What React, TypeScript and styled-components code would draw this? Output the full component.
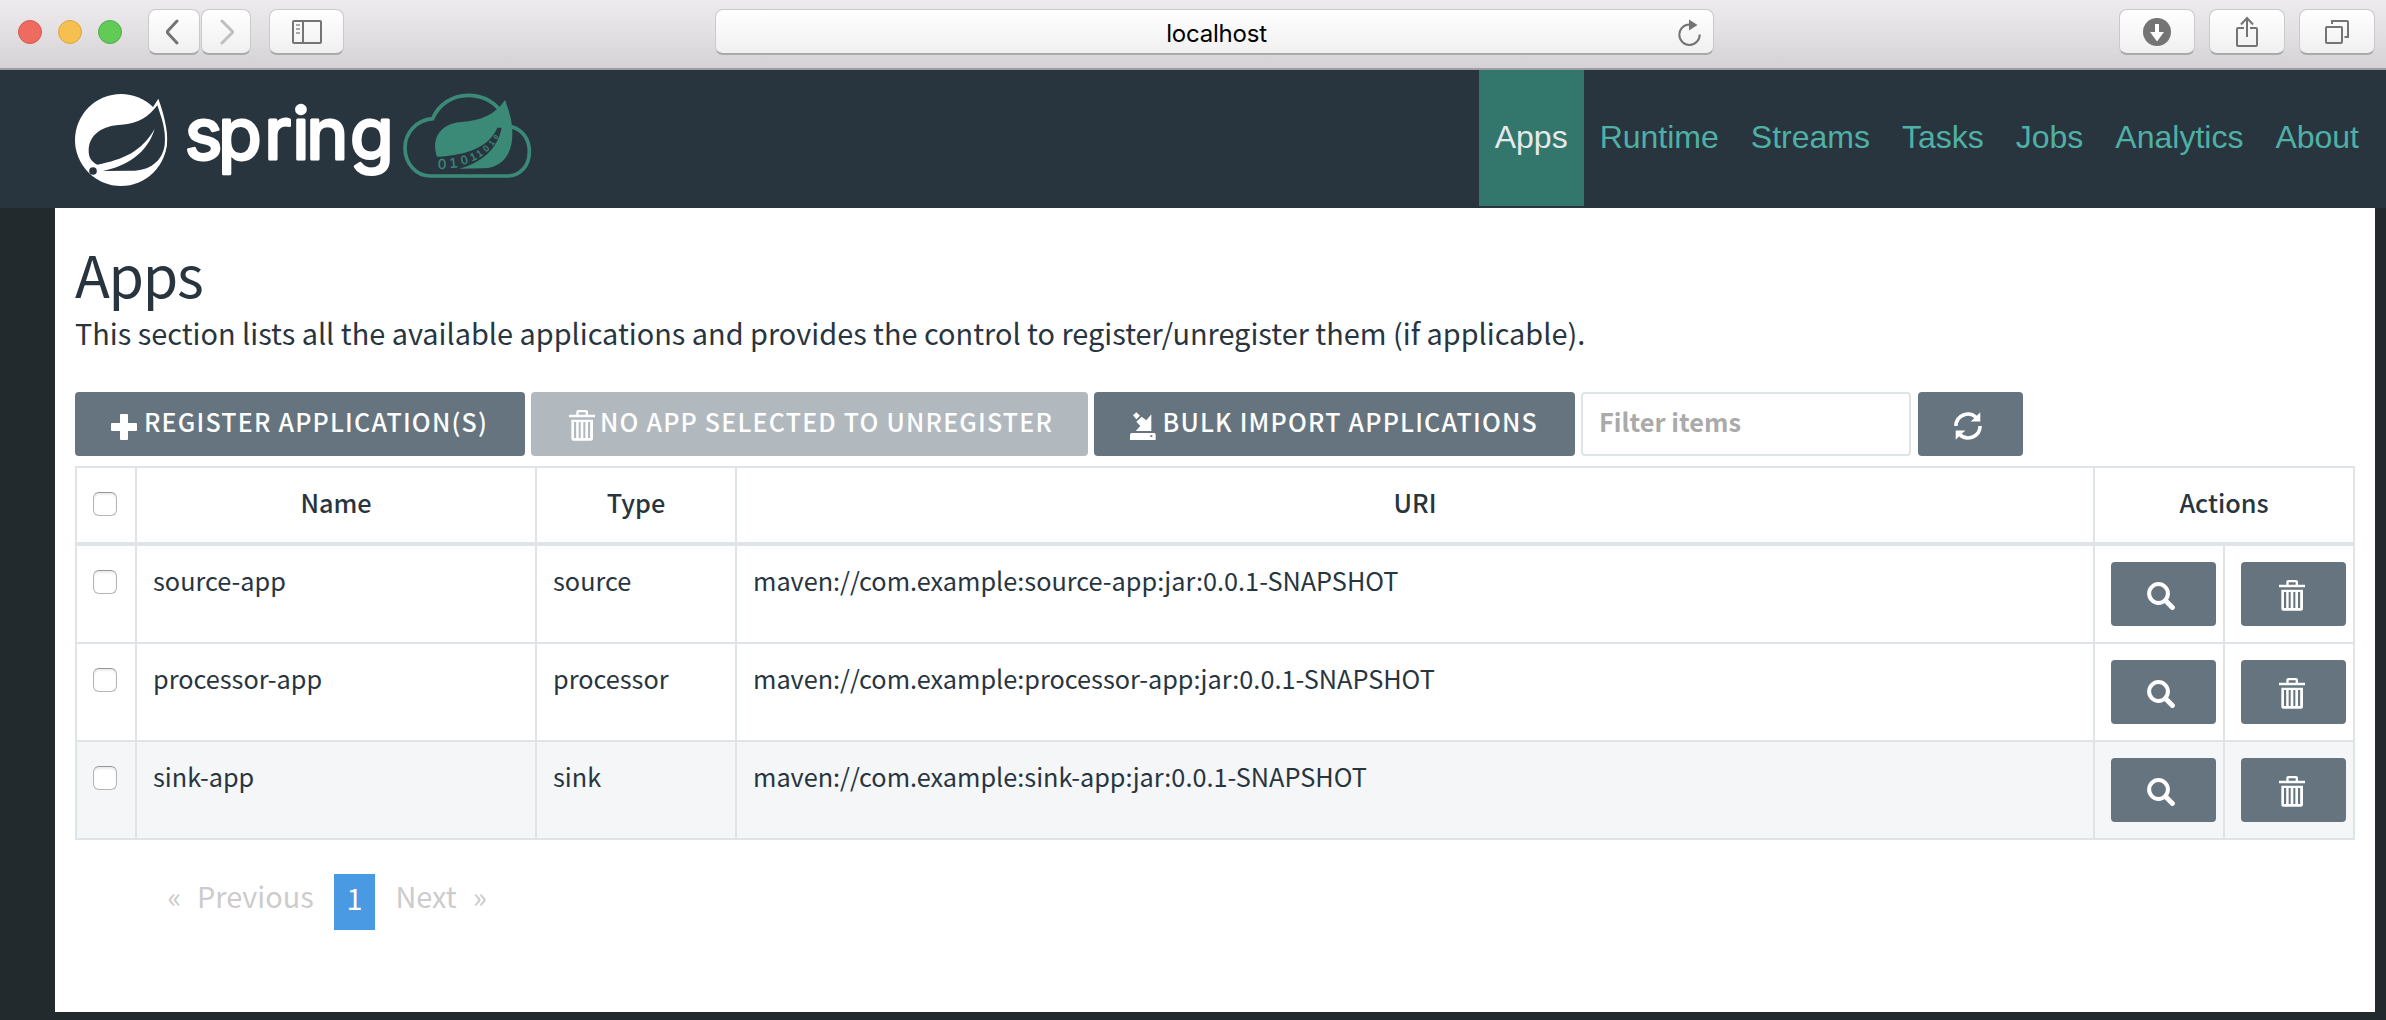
import React from "react";
import styled, { createGlobalStyle, css } from "styled-components";

const sans = `"Source Sans Pro", "Noto Sans CJK SC", "Open Sans", sans-serif`;
const ink = "#28353f";
const line = "#dfe5e7";
const slate = "#65747e";

const GlobalStyle = createGlobalStyle`
  *, *::before, *::after { box-sizing: border-box; }
  body { margin: 0; background: #232a2d; color: ${ink}; font-family: ${sans}; }
  button, input { font: inherit; margin: 0; }
`;

/* ---------- browser chrome ---------- */

const Page = styled.div`
  width: 2386px;
  height: 1020px;
  overflow: hidden;
  display: flex;
  flex-direction: column;
  background: #232a2d;
`;

const Chrome = styled.div`
  height: 70px;
  flex: none;
  display: flex;
  align-items: flex-start;
  padding: 9px 11.5px 0 18px;
  background: linear-gradient(#edebed, #e3e1e4 45%, #d4d2d5);
  border-bottom: 2px solid #a09ea2;
`;

const Lights = styled.div`
  display: flex;
  gap: 16px;
  margin: 11px 25.5px 0 0;
`;

const Light = styled.span<{ $fill: string; $edge: string }>`
  width: 24px;
  height: 24px;
  border-radius: 50%;
  background: ${(p) => p.$fill};
  border: 1px solid ${(p) => p.$edge};
`;

const raised = css`
  height: 46px;
  border: 1px solid #cbc9cc;
  border-bottom: 2px solid #a9a8aa;
  border-radius: 8px;
  background: linear-gradient(#ffffff, #f0f0f0);
`;

const ChromeButton = styled.button<{ $width: number; $gap?: number }>`
  ${raised}
  width: ${(p) => p.$width}px;
  margin-right: ${(p) => p.$gap ?? 0}px;
  padding: 0;
  display: flex;
  align-items: center;
  justify-content: center;
  color: #747474;
`;

const AddressBar = styled.div`
  ${raised}
  width: 999px;
  margin-left: 371px;
  margin-right: auto;
  padding-right: 8px;
  display: grid;
  grid-template-columns: 36px 1fr 28px;
  align-items: center;
  color: #747474;
`;

const Address = styled.span`
  grid-column: 2;
  text-align: center;
  color: #000;
  font: 400 24px/44px Inter, "Liberation Sans", sans-serif;
  letter-spacing: -0.2px;
  padding-top: 2px;
  padding-left: 4px;
`;

/* ---------- site header ---------- */

const Header = styled.header`
  height: 138px;
  flex: none;
  display: flex;
  justify-content: space-between;
  padding: 0 11px 2px 60px;
  background: ${ink};
`;

const LogoLink = styled.a`
  display: block;
  height: 120px;
  margin-top: 10px;
`;

const Nav = styled.nav`
  display: flex;
`;

const NavItem = styled.a<{ $active?: boolean }>`
  padding: 0 16px;
  font: 400 32px/134px "Liberation Sans", Arial, sans-serif;
  color: ${(p) => (p.$active ? "#e6e9ea" : "#4fb0a5")};
  background: ${(p) => (p.$active ? "#32766c" : "transparent")};
`;

/* ---------- content ---------- */

const Panel = styled.main`
  flex: none;
  height: 804px;
  margin: 0 11px 0 55px;
  padding: 27px 20px 0;
  background: #fff;
`;

const Title = styled.h1`
  margin: 0;
  font-size: 57.3px;
  font-weight: 400;
  line-height: 77px;
  letter-spacing: -1.3px;
`;

const Lead = styled.p`
  margin: 0 0 40px;
  font-size: 28.88px;
  line-height: 40px;
`;

const Toolbar = styled.div`
  display: flex;
  height: 64px;
  margin-bottom: 10px;
`;

const ActionButton = styled.button<{ $width: number; $gap?: number; $muted?: boolean; $inset?: number }>`
  width: ${(p) => p.$width}px;
  height: 64px;
  margin-right: ${(p) => p.$gap ?? 0}px;
  padding: 0 0 0 ${(p) => p.$inset ?? 36}px;
  border: 0;
  border-radius: 4px;
  display: flex;
  align-items: center;
  color: #fff;
  background: ${(p) => (p.$muted ? "#b1b9bf" : slate)};
  font-size: 25px;
  font-weight: 500;
  letter-spacing: 1.2px;
  white-space: nowrap;
  svg { flex: none; }
`;

const Label = styled.span<{ $indent: number }>`
  margin-left: ${(p) => p.$indent}px;
  line-height: 36px;
  padding-bottom: 6px;
`;

const FilterInput = styled.input`
  width: 329.5px;
  height: 64px;
  margin-right: 7.5px;
  padding: 0 16px 6px;
  border: 2px solid ${line};
  border-radius: 4px;
  background: #fff;
  font-size: 25.4px;
  font-weight: 700;
  outline: none;
  &::placeholder { color: #aaa; opacity: 1; }
`;

const Table = styled.div`
  border-top: 2px solid ${line};
  border-left: 2px solid ${line};
  font-size: 25.27px;
`;

const columns = css`
  display: grid;
  grid-template-columns: 60px 400px 200px 1358px 130px 130px;
`;

const HeadRow = styled.div`
  ${columns}
  height: 78px;
  border-bottom: 4px solid ${line};
  font-weight: 500;
  text-align: center;
  line-height: 69px;
`;

const Row = styled.div<{ $shaded?: boolean }>`
  ${columns}
  height: 98px;
  border-bottom: 2px solid ${line};
  background: ${(p) => (p.$shaded ? "#f4f6f8" : "#fff")};
`;

const Cell = styled.div<{ $span?: number }>`
  grid-column: span ${(p) => p.$span ?? 1};
  border-right: 2px solid ${line};
`;

const TextCell = styled(Cell)`
  padding: 14px 15px 0 16px;
  line-height: 40px;
`;

const CheckCell = styled(Cell)`
  padding: 24px 0 0 16px;
  line-height: 0;
  text-align: left;
`;

const ButtonCell = styled(Cell)`
  padding: 16px 0 0 16px;
`;

const Checkbox = styled.input.attrs({ type: "checkbox" })`
  appearance: none;
  width: 24px;
  height: 24px;
  border: 1.5px solid #b4b4b4;
  border-top-color: #969696;
  border-radius: 6px;
  background: #fff;
  box-shadow: inset 0 2px 2px #ececec;
`;

const Pagination = styled.div`
  display: flex;
  margin-top: 34px;
  padding-left: 92.5px;
  height: 56px;
  font-size: 28.86px;
  color: #ccc;
`;

const PageWord = styled.span<{ $width: number }>`
  width: ${(p) => p.$width}px;
  line-height: 43px;
`;

const CurrentPage = styled.span`
  width: 41px;
  margin-right: 20.5px;
  text-align: center;
  line-height: 47px;
  color: #fff;
  background: #4a99e3;
`;

/* ---------- drawings ---------- */

const LogoDigit = styled.text`
  font-family: "Liberation Sans", sans-serif;
  font-weight: 400;
  fill: #3b8a78;
  stroke: #3b8a78;
  stroke-width: 1px;
  text-anchor: middle;
`;

const LogoWord = styled.text`
  font-family: Inter, sans-serif;
  font-weight: 400;
  font-size: 214px;
  fill: #fff;
  stroke: #fff;
  stroke-width: 9px;
  stroke-linejoin: round;
`;

const digits: [string, number, number, number, number][] = [
  ["0", 1146, 268, 44, 0],
  ["1", 1182, 263, 42, -6],
  ["0", 1216, 252, 36, -14],
  ["1", 1244, 240, 32, -24],
  ["1", 1264, 228, 28, -32],
  ["0", 1284, 212, 26, -42],
  ["1", 1301, 193, 22, -50],
  ["0", 1313, 174, 18, -58],
];

const SpringLogo = () => (
  <svg width="480" height="120" viewBox="0 0 1440 360" aria-label="spring cloud data flow">
    <circle cx="183" cy="180" r="138" fill="#fff" />
    <path d="M295 56 C309 95 325 150 321 190 C316 240 280 290 220 300 L180 200 L276 86 Z" fill="#fff" />
    <path
      d="M292 76 C304 112 319 150 314 195 C307 248 262 276 205 272 L128 273 C200 258 262 220 284 146 C245 215 190 238 112 254 C93 244 86 232 86 212 C86 165 125 136 185 134 C235 132 268 108 292 76 Z"
      fill={ink}
    />
    <circle cx="99" cy="273" r="11.5" fill={ink} />
    <LogoWord x="374 474 613 697 739 870" y="237">spring</LogoWord>
    <path
      d="M1355 140 C1390 150 1408 180 1408 215 C1408 258 1380 288 1340 288 L1112 288 C1068 288 1035 250 1035 203 C1035 158 1070 120 1118 116 C1135 75 1175 46 1225 46 C1262 46 1295 60 1320 90"
      fill="none"
      stroke="#3b8a78"
      strokeWidth="11"
    />
    <path
      d="M1335 60 C1346 92 1358 120 1357 165 C1356 228 1322 264 1270 265 L1198 266 C1262 248 1312 210 1325 143 L1312 143 C1290 195 1230 226 1131 230 C1112 175 1142 130 1205 126 C1262 122 1305 105 1335 60 Z"
      fill="#3b8a78"
    />
    {digits.map(([d, x, y, size, turn], i) => (
      <LogoDigit key={i} x={x} y={y} fontSize={size} transform={`rotate(${turn} ${x} ${y})`}>
        {d}
      </LogoDigit>
    ))}
  </svg>
);

const Chevron = ({ forward }: { forward?: boolean }) => (
  <svg width="16" height="26" viewBox="0 0 16 26" fill="none" stroke={forward ? "#bfbfbf" : "#747474"} strokeWidth="3" strokeLinecap="round" strokeLinejoin="round">
    <path d={forward ? "M4 2 L15 13 L4 24" : "M11 2 L0.8 13 L11 24"} />
  </svg>
);

const SidebarIcon = () => (
  <svg width="30" height="24" viewBox="0 0 30 24" fill="none" stroke="currentColor" strokeWidth="2">
    <rect x="1" y="1" width="28" height="22" rx="1" />
    <path d="M11 1 V23" />
    <path d="M4 5 H8 M4 9 H8 M4 13 H8" opacity=".6" />
  </svg>
);

const ReloadIcon = () => (
  <svg width="26" height="28" viewBox="0 0 26 28">
    <path d="M12.5 5.5 A10.2 10.2 0 1 0 22.7 15.5" fill="none" stroke="currentColor" strokeWidth="2" />
    <path d="M12 0.5 L20.5 6 L12 11.5 Z" fill="currentColor" />
  </svg>
);

const DownloadIcon = () => (
  <svg width="28" height="28" viewBox="0 0 28 28">
    <circle cx="14" cy="14" r="14" fill="currentColor" />
    <path d="M12 6 H16 V14 H21 L14 23.5 L7 14 H12 Z" fill="#fff" />
  </svg>
);

const ShareIcon = () => (
  <svg width="24" height="32" viewBox="0 0 24 32" fill="none" stroke="currentColor" strokeWidth="2">
    <path d="M9 12 H3 Q2 12 2 13 V29 Q2 30 3 30 H21 Q22 30 22 29 V13 Q22 12 21 12 H15" />
    <path d="M12 21 V2 M6 8.5 L12 2 L18 8.5" />
  </svg>
);

const TabsIcon = () => (
  <svg width="24" height="24" viewBox="0 0 24 24" fill="none" stroke="currentColor" strokeWidth="2">
    <rect x="1" y="7" width="16" height="16" rx="1" />
    <path d="M7 4 V1 H22 Q23 1 23 2 V17 H19.5" />
  </svg>
);

const PlusIcon = styled(({ className }: { className?: string }) => (
  <svg className={className} width="26" height="26" viewBox="0 0 26 26">
    <path d="M10 0 H16 Q17 0 17 1 V9 H25 Q26 9 26 10 V16 Q26 17 25 17 H17 V25 Q17 26 16 26 H10 Q9 26 9 25 V17 H1 Q0 17 0 16 V10 Q0 9 1 9 H9 V1 Q9 0 10 0 Z" fill="#fff" />
  </svg>
))`
  margin-top: 6px;
`;

const TrashIcon = styled(({ className }: { className?: string }) => (
  <svg className={className} width="26" height="31" viewBox="0 0 78 93">
    <path
      fillRule="evenodd"
      fill="#fff"
      d="M22 14 V5 Q22 0 28 0 H51 Q57 0 57 5 V14 H78 V22 H0 V14 Z M29 14 H50 V7 H29 Z
         M7 29 H72 V86 Q72 92 66 92 H13 Q7 92 7 86 Z
         M15 36 H21.5 V84 H15 Z M29 36 H35 V84 H29 Z M43 36 H49 V84 H43 Z M57 36 H63.5 V84 H57 Z"
    />
  </svg>
))`
  margin-top: 2px;
`;

const ImportIcon = styled(({ className }: { className?: string }) => (
  <svg className={className} width="26" height="28" viewBox="60 66 78 84">
    <path d="M69 76 L79 67 L90 77 L79 88 Z M124 73 V123 H77 L91 108 L79 95 L95 80 L109 91 Z" fill="#fff" />
    <path fillRule="evenodd" d="M64 129 H134 L137 133 V150 H60 V133 Z M121 136 H127 V141 H121 Z" fill="#fff" />
  </svg>
))`
  margin-top: 4px;
`;

const RefreshIcon = styled(({ className }: { className?: string }) => (
  <svg className={className} width="28" height="28" viewBox="0 0 28 28">
    <g fill="none" stroke="#fff" strokeWidth="3.6">
      <path d="M1.9 14 A12 12 0 0 1 22.5 5.8" />
      <path d="M26.1 14 A12 12 0 0 1 5.5 22.2" />
    </g>
    <path d="M26.3 0.2 V9.5 H16.6 L20 6.4 Z M1.7 27.8 V18.5 H11.4 L8 21.6 Z" fill="#fff" />
  </svg>
))`
  margin-top: 4px;
`;

const SearchIcon = styled(({ className }: { className?: string }) => (
  <svg className={className} width="28" height="28" viewBox="0 0 28 28" fill="none" stroke="#fff">
    <circle cx="11.5" cy="11.5" r="9.4" strokeWidth="4" />
    <path d="M18.5 18.5 L25.4 25.4" strokeWidth="5" strokeLinecap="round" />
  </svg>
))`
  margin-top: 4px;
`;

/* ---------- page ---------- */

const links = ["Apps", "Runtime", "Streams", "Tasks", "Jobs", "Analytics", "About"];

const apps = [
  { name: "source-app", type: "source" },
  { name: "processor-app", type: "processor" },
  { name: "sink-app", type: "sink" },
];

export default function App() {
  return (
    <Page>
      <GlobalStyle />
      <Chrome>
        <Lights>
          <Light $fill="#ee6b60" $edge="#d65a50" />
          <Light $fill="#f6c050" $edge="#dba640" />
          <Light $fill="#62ca56" $edge="#4fae44" />
        </Lights>
        <ChromeButton $width={52} $gap={1} aria-label="Back"><Chevron /></ChromeButton>
        <ChromeButton $width={50} $gap={18.5} aria-label="Forward"><Chevron forward /></ChromeButton>
        <ChromeButton $width={75} aria-label="Sidebar"><SidebarIcon /></ChromeButton>
        <AddressBar>
          <Address>localhost</Address>
          <ReloadIcon />
        </AddressBar>
        <ChromeButton $width={75.5} $gap={14.5} aria-label="Downloads"><DownloadIcon /></ChromeButton>
        <ChromeButton $width={75.5} $gap={14.5} aria-label="Share"><ShareIcon /></ChromeButton>
        <ChromeButton $width={75.5} aria-label="Tabs"><TabsIcon /></ChromeButton>
      </Chrome>

      <Header>
        <LogoLink><SpringLogo /></LogoLink>
        <Nav>
          {links.map((label, i) => (
            <NavItem key={label} $active={i === 0}>{label}</NavItem>
          ))}
        </Nav>
      </Header>

      <Panel>
        <Title>Apps</Title>
        <Lead>
          This section lists all the available applications and provides the control to register/unregister them (if applicable).
        </Lead>

        <Toolbar>
          <ActionButton $width={450} $gap={6}>
            <PlusIcon />
            <Label $indent={7}>REGISTER APPLICATION(S)</Label>
          </ActionButton>
          <ActionButton $width={557} $gap={6} $muted $inset={38}>
            <TrashIcon />
            <Label $indent={5}>NO APP SELECTED TO UNREGISTER</Label>
          </ActionButton>
          <ActionButton $width={481} $gap={6}>
            <ImportIcon />
            <Label $indent={6.5}>BULK IMPORT APPLICATIONS</Label>
          </ActionButton>
          <FilterInput placeholder="Filter items" />
          <ActionButton $width={105} aria-label="Refresh"><RefreshIcon /></ActionButton>
        </Toolbar>

        <Table>
          <HeadRow>
            <CheckCell><Checkbox /></CheckCell>
            <Cell>Name</Cell>
            <Cell>Type</Cell>
            <Cell>URI</Cell>
            <Cell $span={2}>Actions</Cell>
          </HeadRow>
          {apps.map((app, i) => (
            <Row key={app.name} $shaded={i === 2}>
              <CheckCell><Checkbox /></CheckCell>
              <TextCell>{app.name}</TextCell>
              <TextCell>{app.type}</TextCell>
              <TextCell>{`maven://com.example:${app.name}:jar:0.0.1-SNAPSHOT`}</TextCell>
              <ButtonCell>
                <ActionButton $width={105} aria-label="Details"><SearchIcon /></ActionButton>
              </ButtonCell>
              <ButtonCell>
                <ActionButton $width={105} $inset={38} aria-label="Unregister"><TrashIcon /></ActionButton>
              </ButtonCell>
            </Row>
          ))}
        </Table>

        <Pagination>
          <PageWord $width={29.5}>«</PageWord>
          <PageWord $width={137}>Previous</PageWord>
          <CurrentPage>1</CurrentPage>
          <PageWord $width={77.5}>Next</PageWord>
          <PageWord $width={20}>»</PageWord>
        </Pagination>
      </Panel>
    </Page>
  );
}
